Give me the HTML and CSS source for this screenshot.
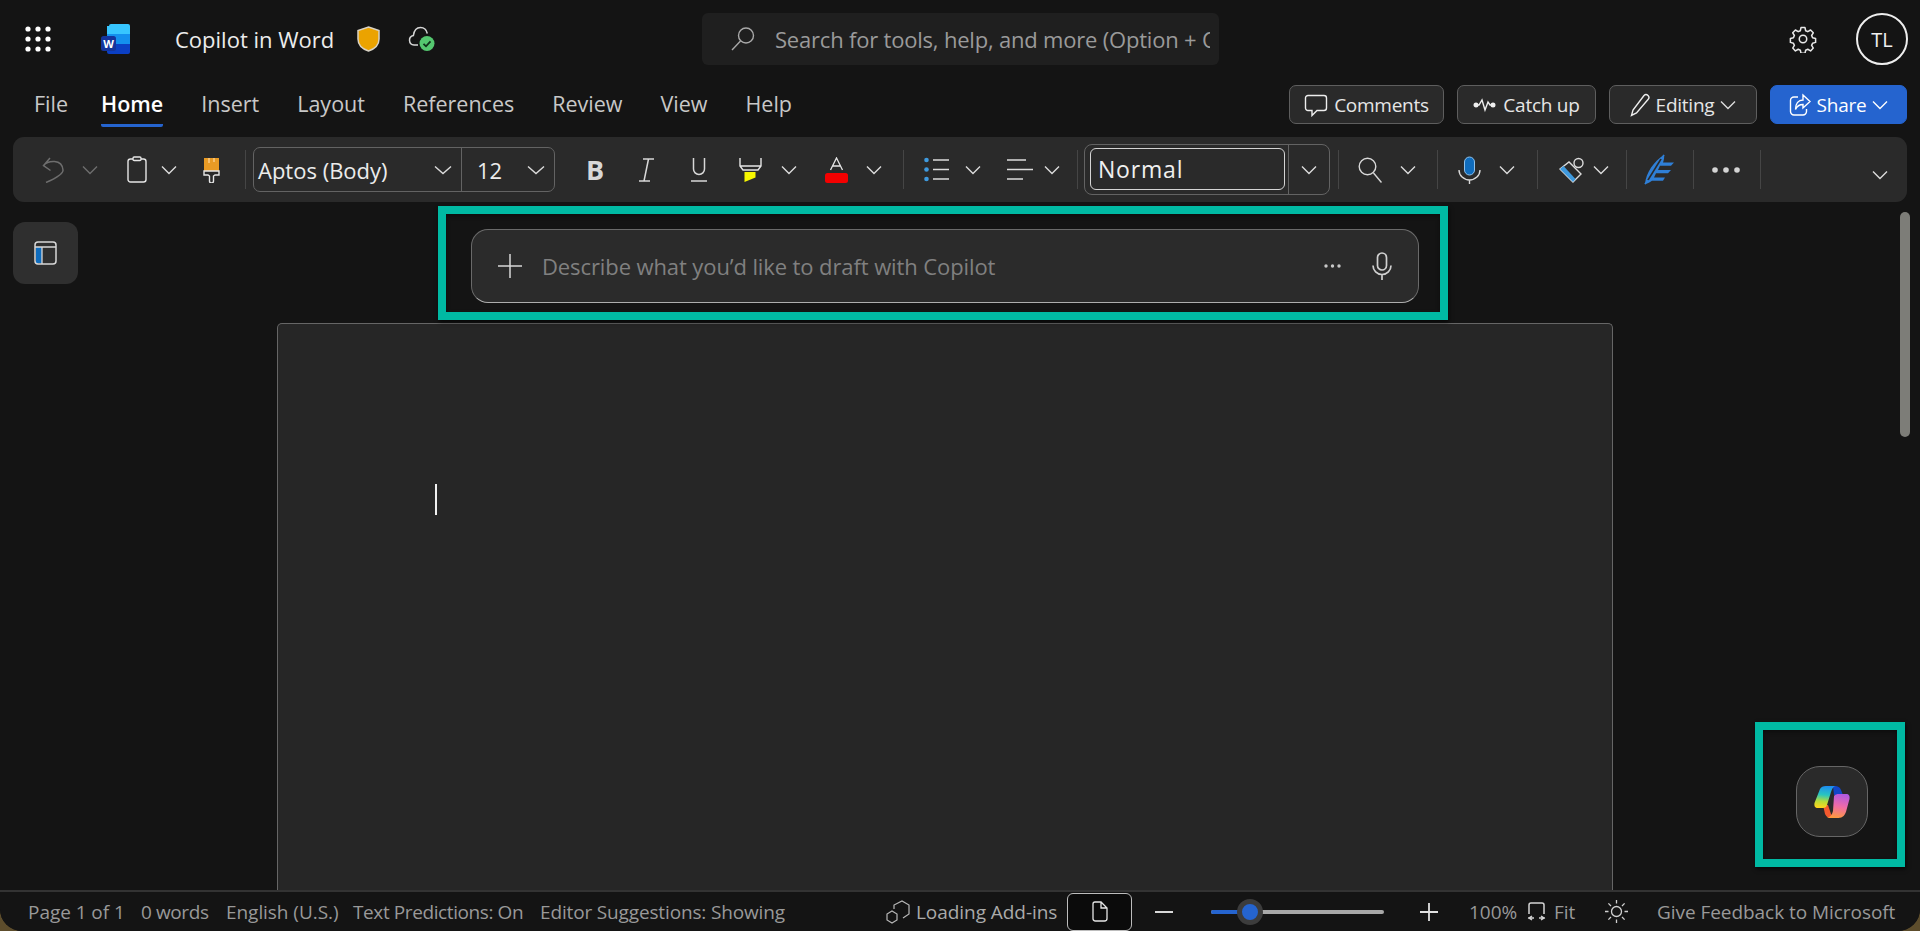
FILE: index.html
```html
<!DOCTYPE html>
<html lang="en">
<head>
    <meta charset="UTF-8">
    <title>Copilot in Word</title>
    <link rel="stylesheet" href="styles.css">
</head>
<body>
<div class="app">
    <!-- title bar -->
    <header class="titlebar">
        <svg class="waffle" width="26" height="26" viewBox="0 0 26 26" fill="#fff">
            <circle cx="3" cy="3" r="2.6"/><circle cx="13" cy="3" r="2.6"/><circle cx="23" cy="3" r="2.6"/>
            <circle cx="3" cy="13" r="2.6"/><circle cx="13" cy="13" r="2.6"/><circle cx="23" cy="13" r="2.6"/>
            <circle cx="3" cy="23" r="2.6"/><circle cx="13" cy="23" r="2.6"/><circle cx="23" cy="23" r="2.6"/>
        </svg>
        <svg class="word-logo" width="29" height="30" viewBox="0 0 29 30">
            <path d="M8 2a2 2 0 0 1 2-2h17a2 2 0 0 1 2 2v9H6V2z" fill="#37c6ff"/>
            <rect x="6" y="10" width="23" height="10" fill="#1490ee"/>
            <path d="M6 20h23v8a2 2 0 0 1-2 2H8a2 2 0 0 1-2-2z" fill="#0b3fc4"/>
            <rect x="0" y="12" width="15" height="15" rx="2.5" fill="#14349c"/>
            <text x="7.5" y="24" class="word-w">W</text>
        </svg>
        <span class="doc-title">Copilot in Word</span>
        <svg class="shield" width="23" height="26" viewBox="0 0 23 26">
            <path d="M11.5 1 22 4.500V13c0 6-4.500 10-10.500 12C5.500 23 1 19 1 13V4.500z" fill="#eba300" stroke="#d8d2c4" stroke-width="1.500"/>
        </svg>
        <svg class="cloud" width="27" height="26" viewBox="0 0 27 26">
            <path d="M10 19H6a4.800 4.800 0 0 1-.6-9.500C6 5 8.600 1.500 12.500 1.500c3.600 0 6 2.300 6.800 6" fill="none" stroke="#d6d6d6" stroke-width="1.500"/>
            <circle cx="19" cy="17.500" r="7.500" fill="#54c76f"/>
            <path d="M15.500 17.800l2.500 2.500 4.500-5" fill="none" stroke="#10301a" stroke-width="1.800"/>
        </svg>
        <div class="search">
            <svg class="search-icon" width="24" height="24" viewBox="0 0 24 24" fill="none" stroke="#a8a8a8" stroke-width="1.400">
                <circle cx="15" cy="8.500" r="7.500"/><path d="M9.500 14 1 23"/>
            </svg>
            <span class="search-text">Search for tools, help, and more (Option + Q)</span>
        </div>
        <svg class="gear" width="28" height="28" viewBox="0 0 24 24" fill="none" stroke="#e8e8e8" stroke-width="1.300" stroke-linejoin="round">
            <circle cx="12" cy="12" r="3.200"/>
            <path d="M10.300 2.200h3.400l.6 2.700 1.800.8 2.400-1.400 2.300 2.400-1.400 2.300.8 1.900 2.600.7v3.300l-2.600.7-.8 1.900 1.400 2.300-2.300 2.400-2.400-1.400-1.800.8-.6 2.700h-3.400l-.6-2.700-1.800-.8-2.400 1.400-2.300-2.400 1.400-2.300-.8-1.900-2.600-.7v-3.300l2.600-.7.8-1.900-1.400-2.300 2.300-2.400 2.400 1.400 1.800-.8z"/>
        </svg>
        <div class="avatar">TL</div>
    </header>

    <!-- tabs and action buttons -->
    <nav class="tabbar">
        <ul class="tabs">
            <li>File</li>
            <li class="active">Home</li>
            <li>Insert</li>
            <li>Layout</li>
            <li>References</li>
            <li>Review</li>
            <li>View</li>
            <li>Help</li>
        </ul>
        <div class="actions">
            <button class="action comments">
                <svg width="24" height="24" viewBox="0 0 24 24" fill="none" stroke="#eee" stroke-width="1.400"><path d="M4 2.500h16a2.500 2.500 0 0 1 2.500 2.500v10a2.500 2.500 0 0 1-2.500 2.500h-7l-5 5v-5H4A2.500 2.500 0 0 1 1.500 15V5A2.500 2.500 0 0 1 4 2.500z"/></svg>
                Comments
            </button>
            <button class="action catchup">
                <svg width="24" height="16" viewBox="0 0 24 16" fill="none" stroke="#eee" stroke-width="1.400"><path d="M3 8h3l3-5 3 10 3-8 2 3h4"/><circle cx="3" cy="8" r="1.800" fill="#eee"/><circle cx="20" cy="8" r="1.800" fill="#eee"/></svg>
                Catch up
            </button>
            <button class="action editing">
                <svg width="20" height="24" viewBox="0 0 20 24" fill="none" stroke="#eee" stroke-width="1.400"><path d="M14 2.500a2.800 2.800 0 0 1 4 4L6.500 20 1.500 22.500 3 17z"/></svg>
                Editing
                <svg class="chev" width="16" height="10" viewBox="0 0 16 10"><path d="M1 1.500l7 7 7-7"/></svg>
            </button>
            <button class="action share">
                <svg width="22" height="24" viewBox="0 0 22 24" fill="none" stroke="#fff" stroke-width="1.400"><path d="M9 4H5a3.500 3.500 0 0 0-3.500 3.500v11A3.500 3.500 0 0 0 5 22h9a3.500 3.500 0 0 0 3.500-3.500V16"/><path d="M14 2l7 6.500L14 15v-3.500c-4 0-6 1.500-7.500 5 0-6 3-9.500 7.500-9.500z"/></svg>
                Share
                <svg class="chev" width="16" height="10" viewBox="0 0 16 10"><path d="M1 1.500l7 7 7-7"/></svg>
            </button>
        </div>
    </nav>

    <!-- ribbon -->
    <div class="ribbon">
        <svg class="undo" width="22" height="26" viewBox="0 0 22 26" fill="none" stroke="#6e6e6e" stroke-width="1.500"><path d="M8 1 1.500 8.500l7 5M1.500 8.500C6 3.500 20 1.500 21 13c.3 4-9 9-17 12.500"/></svg>
        <svg class="chev off undo-chev" width="16" height="10" viewBox="0 0 16 10"><path d="M1 1.500l7 7 7-7"/></svg>
        <svg class="paste" width="20" height="27" viewBox="0 0 20 27" fill="none" stroke="#e6e6e6" stroke-width="1.400"><rect x="1" y="3" width="18" height="23" rx="2.500"/><rect x="6" y="1" width="8" height="3.500" rx="1.200" fill="#2a2a2a"/></svg>
        <svg class="chev paste-chev" width="16" height="10" viewBox="0 0 16 10"><path d="M1 1.500l7 7 7-7"/></svg>
        <svg class="brush" width="17" height="26" viewBox="0 0 17 26"><path d="M1 1h15v13H1z" fill="#e99b25"/><path d="M6 1v5M11 1v4" stroke="#ffd9a0" stroke-width="1.200"/><path d="M1 14h15v4h-4l-1.500 1v5a2 2 0 0 1-4 0v-5L5 18H1z" fill="#2a2a2a" stroke="#e6e6e6" stroke-width="1.400"/></svg>
        <span class="sep sep-a"></span>
        <div class="font-box">
            <div class="font-name">
                <span>Aptos (Body)</span>
                <svg class="chev" width="18" height="10" viewBox="0 0 18 10"><path d="M1 1.500l8 7 8-7"/></svg>
            </div>
            <div class="font-size">
                <span>12</span>
                <svg class="chev" width="18" height="10" viewBox="0 0 18 10"><path d="M1 1.500l8 7 8-7"/></svg>
            </div>
        </div>
        <span class="fmt bold">B</span>
        <svg class="italic" width="17" height="24" viewBox="0 0 17 24" fill="none" stroke="#d8d8d8" stroke-width="1.500"><path d="M5 1h11M1 23h11M10.500 1 6 23"/></svg>
        <svg class="under" width="16" height="25" viewBox="0 0 16 25" fill="none" stroke="#d8d8d8" stroke-width="1.500"><path d="M2.500 1v11a5.500 5.500 0 0 0 11 0V1M0 24h16"/></svg>
        <svg class="hilite" width="23" height="26" viewBox="0 0 23 26" fill="none"><path d="M5.500 15v10l11-4.500V15z" fill="#f7f700"/><path d="M1 1v8l3 4h15l3-4V1M1 9h21" stroke="#e6e6e6" stroke-width="1.400"/></svg>
        <svg class="chev hilite-chev" width="16" height="10" viewBox="0 0 16 10"><path d="M1 1.500l7 7 7-7"/></svg>
        <svg class="color" width="23" height="26" viewBox="0 0 23 26"><path d="M5.500 13 11.500 1l6 12M7.500 9h8" fill="none" stroke="#e6e6e6" stroke-width="1.300"/><rect y="16" width="23" height="10" rx="2.500" fill="#f40000"/></svg>
        <svg class="chev color-chev" width="16" height="10" viewBox="0 0 16 10"><path d="M1 1.500l7 7 7-7"/></svg>
        <span class="sep sep-b"></span>
        <svg class="bullets" width="25" height="25" viewBox="0 0 25 25"><circle cx="2.500" cy="3" r="2.300" fill="#3f9ade"/><circle cx="2.500" cy="12.500" r="2.300" fill="#3f9ade"/><circle cx="2.500" cy="22" r="2.300" fill="#3f9ade"/><path d="M9 3h16M9 12.500h16M9 22h16" stroke="#dcdcdc" stroke-width="1.500"/></svg>
        <svg class="chev bullets-chev" width="16" height="10" viewBox="0 0 16 10"><path d="M1 1.500l7 7 7-7"/></svg>
        <svg class="align" width="26" height="25" viewBox="0 0 26 25"><path d="M0 3h19M0 12.500h26M0 22h16" stroke="#dcdcdc" stroke-width="1.500"/></svg>
        <svg class="chev align-chev" width="16" height="10" viewBox="0 0 16 10"><path d="M1 1.500l7 7 7-7"/></svg>
        <span class="sep sep-c"></span>
        <div class="style-box">
            <div class="style-name">Normal</div>
            <div class="style-more">
                <svg class="chev" width="16" height="10" viewBox="0 0 16 10"><path d="M1 1.500l7 7 7-7"/></svg>
            </div>
        </div>
        <span class="sep sep-d"></span>
        <svg class="find" width="24" height="26" viewBox="0 0 24 26" fill="none" stroke="#d8d8d8" stroke-width="1.400"><circle cx="9.500" cy="9.500" r="8.300"/><path d="m15.500 16 8 9.500"/></svg>
        <svg class="chev find-chev" width="16" height="10" viewBox="0 0 16 10"><path d="M1 1.500l7 7 7-7"/></svg>
        <span class="sep sep-e"></span>
        <svg class="dictate" width="23" height="28" viewBox="0 0 23 28"><rect x="6.500" y="1" width="10" height="18" rx="5" fill="#0f6cbd" stroke="#8fc1ea" stroke-width="1"/><path d="M1 14a10.500 10 0 0 0 21 0M11.500 24v4" fill="none" stroke="#d8d8d8" stroke-width="1.400"/></svg>
        <svg class="chev dictate-chev" width="16" height="10" viewBox="0 0 16 10"><path d="M1 1.500l7 7 7-7"/></svg>
        <span class="sep sep-f"></span>
        <svg class="eraser" width="25" height="26" viewBox="0 0 25 26" fill="none"><circle cx="19.500" cy="6" r="4.500" stroke="#dcdcdc" stroke-width="1.400"/><path d="M1 12 10 5l12 12-8 8z" fill="#2a2a2a" stroke="#dcdcdc" stroke-width="1.400"/><path d="M1 12l3.500-3 12 13-2.500 3z" fill="#3f9ade"/></svg>
        <svg class="chev eraser-chev" width="16" height="10" viewBox="0 0 16 10"><path d="M1 1.500l7 7 7-7"/></svg>
        <span class="sep sep-g"></span>
        <svg class="editor" width="31" height="31" viewBox="0 0 31 37" preserveAspectRatio="none"><path d="M1 36 20 1" fill="none" stroke="#2f7fd6" stroke-width="1.500"/><path d="M1 36C2 22 10 9 20 1c.5 3 0 6-1 9h11l-3 4H16l-2 5h13l-3 4H12l-2 5h11l-2 4H8c-2 2-4 3-7 4z" fill="#2f7fd6"/><path d="M4 31 17 6" fill="none" stroke="#2a2a2a" stroke-width="1.800"/></svg>
        <span class="sep sep-h"></span>
        <svg class="more" width="30" height="8" viewBox="0 0 30 8" fill="#d4d4d4"><circle cx="4" cy="4" r="2.800"/><circle cx="15" cy="4" r="2.800"/><circle cx="26" cy="4" r="2.800"/></svg>
        <span class="sep sep-i"></span>
        <svg class="chev collapse" width="16" height="10" viewBox="0 0 16 10"><path d="M1 1.500l7 7 7-7"/></svg>
    </div>

    <!-- document area -->
    <main class="canvas">
        <div class="side">
            <button class="panel-btn">
                <svg width="23" height="24" viewBox="0 0 23 24" fill="none"><rect x="2" y="6" width="6" height="16" fill="#0f6cbd"/><rect x="1" y="1" width="21" height="22" rx="3" stroke="#d8d8d8" stroke-width="1.500"/><path d="M1 6h21M8 6v17" stroke="#d8d8d8" stroke-width="1.300"/></svg>
            </button>
        </div>
        <div class="doc-col">
            <div class="prompt">
                <svg class="prompt-plus" width="24" height="24" viewBox="0 0 24 24" stroke="#d8d8d8" stroke-width="1.500"><path d="M0 12h24M12 0v24"/></svg>
                <span class="prompt-text">Describe what you’d like to draft with Copilot</span>
                <svg class="prompt-dots" width="17" height="4" viewBox="0 0 17 4" fill="#c8c8c8"><circle cx="2" cy="2" r="1.700"/><circle cx="8.500" cy="2" r="1.700"/><circle cx="15" cy="2" r="1.700"/></svg>
                <svg class="prompt-mic" width="20" height="28" viewBox="0 0 20 28" fill="none" stroke="#d0d0d0" stroke-width="1.700"><rect x="5.500" y="1" width="9" height="17" rx="4.500"/><path d="M1 13.500a9 9 0 0 0 18 0M10 23v5"/></svg>
            </div>
            <div class="page">
                <span class="caret"></span>
            </div>
        </div>

        <!-- floating bits on top of the document -->
        <div class="scroll-thumb"></div>
        <button class="copilot-btn">
            <svg width="36" height="32" viewBox="0 0 36 32">
                <defs>
                    <linearGradient id="cpLeft" x1="0.500" y1="0" x2="0.400" y2="1">
                        <stop offset="0" stop-color="#1d8df0"/>
                        <stop offset="0.400" stop-color="#28c5c0"/>
                        <stop offset="0.700" stop-color="#b5dc3a"/>
                        <stop offset="1" stop-color="#ffd41c"/>
                    </linearGradient>
                    <linearGradient id="cpRight" x1="0.600" y1="0" x2="0.400" y2="1">
                        <stop offset="0" stop-color="#b15ae0"/>
                        <stop offset="0.500" stop-color="#ef6ba8"/>
                        <stop offset="1" stop-color="#ff9a3e"/>
                    </linearGradient>
                </defs>
                <path d="M19 0c4-.5 7 1 8 4l2 5h-9z" fill="#1246c8"/>
                <path d="M9 19h5l3 9 2 3c-3 1.500-6 1-8-3z" fill="#f4592e"/>
                <path d="M6 3C7 1 9 0 12 0h9c-2 1-3 3-4 6l-4 13c-.5 2-2 3-4 3H4c-3 0-4-2-3.500-5z" fill="url(#cpLeft)"/>
                <path d="M20 10c1-1.500 3-2 5-2h7c3 0 4 2 3.500 5l-3 11c-1 5-4 8-8 8H13c3-1 5-3 6-7z" fill="url(#cpRight)"/>
            </svg>
        </button>
        <div class="mark mark-prompt"></div>
        <div class="mark mark-copilot"></div>
    </main>

    <!-- status bar -->
    <footer class="statusbar">
        <span class="st page-count">Page 1 of 1</span>
        <span class="st words">0 words</span>
        <span class="st lang">English (U.S.)</span>
        <span class="st predict">Text Predictions: On</span>
        <span class="st suggest">Editor Suggestions: Showing</span>
        <svg class="addin-icon" width="24" height="24" viewBox="0 0 24 24" fill="none" stroke="#b8b8b8" stroke-width="1.200"><path d="M8 9V5l8-4 7 4v9l-6 4M1 14v6l5 3 5-3v-6l-5-3z"/></svg>
        <span class="st addins">Loading Add-ins</span>
        <button class="view-btn">
            <svg width="16" height="21" viewBox="0 0 16 21" fill="none" stroke="#e6e6e6" stroke-width="1.300"><path d="M3 1h6l6 6v10.500a2.500 2.500 0 0 1-2.500 2.500h-9A2.500 2.500 0 0 1 1 17.500V3a2 2 0 0 1 2-2zM9 1v6h6"/></svg>
        </button>
        <svg class="zoom-minus" width="18" height="2" viewBox="0 0 18 2"><rect width="18" height="2" fill="#d8d8d8"/></svg>
        <div class="slider"><span class="slider-fill"></span><span class="slider-thumb"></span></div>
        <svg class="zoom-plus" width="18" height="18" viewBox="0 0 18 18" stroke="#e0e0e0" stroke-width="1.800"><path d="M0 9h18M9 0v18"/></svg>
        <span class="st pct">100%</span>
        <svg class="fit-icon" width="19" height="19" viewBox="0 0 19 19" fill="none" stroke="#d4d4d4" stroke-width="1.500"><path d="M2 12V3a2 2 0 0 1 2-2h11a2 2 0 0 1 2 2v9M1 16h6M5 14l-3 2 3 2M18 16h-6M14 14l3 2-3 2"/></svg>
        <span class="st fit">Fit</span>
        <svg class="sun" width="23" height="23" viewBox="0 0 23 23" fill="none" stroke="#d0d0d0" stroke-width="1.300"><circle cx="11.500" cy="11.500" r="5"/><path d="M11.500 0v3.500M11.500 19.500V23M0 11.500h3.500M19.500 11.500H23M3.400 3.400 6 6M17 17l2.600 2.600M3.400 19.600 6 17M17 6l2.600-2.600"/></svg>
        <span class="st feedback">Give Feedback to Microsoft</span>
    </footer>
</div>
</body>
</html>
```

FILE: styles.css
```css
* {
    box-sizing: border-box;
}
html, body {
    margin: 0;
    height: 100%;
    overflow: hidden;
}
body {
    background: #5d4d2c;
    font-family: "Open Sans", "Noto Sans", sans-serif;
    color: #e6e6e6;
}
button {
    font-family: inherit;
    color: inherit;
    padding: 0;
}
svg {
    display: block;
    flex: none;
}
.chev {
    fill: none;
    stroke: #dcdcdc;
    stroke-width: 1.400;
}
.chev.off {
    stroke: #6e6e6e;
}

.app {
    display: flex;
    flex-direction: column;
    height: 931px;
    background: #141414;
    border-radius: 0 0 22px 22px;
    overflow: hidden;
}

/* title bar */
.titlebar {
    display: flex;
    align-items: center;
    height: 78px;
    flex: none;
}
.waffle {
    margin-left: 25px;
}
.word-logo {
    margin-left: 50px;
}
.word-w {
    font-size: 11px;
    font-weight: 700;
    fill: #fff;
    text-anchor: middle;
}
.doc-title {
    margin-left: 45px;
    width: 182px;
    font-size: 22px;
    color: #ececec;
    white-space: nowrap;
}
.shield {
    margin-top: -1px;
}
.cloud {
    margin-left: 28px;
}
.search {
    display: flex;
    align-items: center;
    width: 517px;
    height: 52px;
    margin-left: 267px;
    padding: 0 9px 0 29px;
    background: #1f1f1f;
    border-radius: 6px;
    overflow: hidden;
}
.search-text {
    margin-left: 20px;
    font-size: 22px;
    letter-spacing: -0.2px;
    color: #9a9a9a;
    white-space: nowrap;
    overflow: hidden;
}
.gear {
    margin-left: 570px;
}
.avatar {
    display: flex;
    align-items: center;
    justify-content: center;
    width: 52px;
    height: 52px;
    margin-left: 39px;
    border: 2px solid #eee;
    border-radius: 50%;
    font-size: 20px;
    color: #f0f0f0;
}

/* tabs */
.tabbar {
    display: flex;
    justify-content: space-between;
    height: 59px;
    flex: none;
    padding: 7px 13px 0 34px;
}
.tabs {
    display: flex;
    gap: 38px;
    margin: 0;
    padding: 0;
    list-style: none;
    font-size: 21.500px;
    color: #c8c8c8;
}
.tabs li {
    height: 42px;
    line-height: 38px;
    border-bottom: 3px solid transparent;
}
.tabs .active {
    margin-left: -5px;
    font-weight: 600;
    color: #fff;
    border-bottom-color: #2564cf;
    border-radius: 0 0 2px 2px;
}
.actions {
    display: flex;
    gap: 13px;
}
.action {
    display: flex;
    align-items: center;
    justify-content: center;
    gap: 6px;
    height: 39px;
    background: #2a2a2a;
    border: 1.500px solid #5e5e5e;
    border-radius: 7px;
    font-size: 19px;
    letter-spacing: -0.25px;
    color: #e6e6e6;
}
.comments {
    width: 155px;
}
.catchup {
    width: 139px;
}
.editing {
    width: 148px;
}
.share {
    width: 137px;
    background: #2564cf;
    border-color: #2564cf;
    color: #fff;
}
.share .chev {
    stroke: #fff;
}

/* ribbon */
.ribbon {
    display: flex;
    align-items: center;
    height: 65px;
    flex: none;
    margin: 0 13px;
    background: #2a2a2a;
    border-radius: 11px;
}
.sep {
    width: 1px;
    height: 39px;
    background: #454545;
}
.undo { margin-left: 29px; }
.undo-chev { margin-left: 18px; }
.paste { margin-left: 29px; }
.paste-chev { margin-left: 14px; }
.brush { margin-left: 26px; }
.sep-a { margin-left: 25px; }
.font-box {
    display: flex;
    height: 45px;
    width: 302px;
    margin-left: 7px;
    border: 1.500px solid #636363;
    border-radius: 7px;
    font-size: 22px;
    color: #ececec;
}
.font-name {
    display: flex;
    align-items: center;
    justify-content: space-between;
    width: 208px;
    padding: 0 9px 0 4px;
    border-right: 1.500px solid #636363;
    white-space: nowrap;
}
.font-size {
    display: flex;
    align-items: center;
    justify-content: space-between;
    flex: 1;
    padding: 0 9px 0 15px;
}
.fmt.bold {
    margin-left: 31px;
    width: 18px;
    font-size: 27px;
    font-weight: 700;
    color: #d8d8d8;
    font-family: "Open Sans", sans-serif;
}
.italic { margin-left: 34px; }
.under { margin-left: 36px; }
.hilite { margin-left: 32px; }
.hilite-chev { margin-left: 19px; }
.color { margin-left: 28px; }
.color-chev { margin-left: 18px; }
.sep-b { margin-left: 21px; }
.bullets { margin-left: 20px; }
.bullets-chev { margin-left: 16px; }
.align { margin-left: 26px; }
.align-chev { margin-left: 11px; }
.sep-c { margin-left: 17px; }
.style-box {
    display: flex;
    height: 51px;
    width: 246px;
    margin-left: 6px;
    border: 1.500px solid #636363;
    border-radius: 8px;
}
.style-name {
    width: 195px;
    height: 42px;
    margin: 3px 0 0 5px;
    padding-left: 7px;
    border: 1.500px solid #d4d4d4;
    border-radius: 6px;
    font-size: 23px;
    line-height: 40px;
    letter-spacing: 0.8px;
    color: #f0f0f0;
}
.style-more {
    display: flex;
    align-items: center;
    justify-content: center;
    flex: 1;
    margin-left: 3px;
    border-left: 1.500px solid #636363;
}
.sep-d { margin-left: 8px; }
.find { margin-left: 19px; }
.find-chev { margin-left: 18px; }
.sep-e { margin-left: 21px; }
.dictate { margin-left: 20px; }
.dictate-chev { margin-left: 18px; }
.sep-f { margin-left: 22px; }
.eraser { margin-left: 21px; }
.eraser-chev { margin-left: 9px; }
.sep-g { margin-left: 17px; }
.editor { margin-left: 17px; }
.sep-h { margin-left: 18px; }
.more { margin-left: 17px; }
.sep-i { margin-left: 19px; }
.collapse {
    margin-left: 111px;
    margin-top: 10px;
}

/* document area */
.canvas {
    position: relative;
    display: flex;
    flex: 1;
    min-height: 0;
}
.side {
    width: 277px;
    flex: none;
    padding: 20px 0 0 13px;
}
.panel-btn {
    display: flex;
    align-items: center;
    justify-content: center;
    width: 65px;
    height: 62px;
    background: #2f2f2f;
    border: 0;
    border-radius: 12px;
}
.doc-col {
    display: flex;
    flex-direction: column;
    width: 1336px;
}
.prompt {
    display: flex;
    align-items: center;
    flex: none;
    width: 948px;
    height: 74px;
    margin: 27px 0 0 194px;
    padding: 0 26px 0 26px;
    background: #2b2b2b;
    border: 1.500px solid #6a6a6a;
    border-bottom-color: #adadad;
    border-radius: 17px;
}
.prompt-text {
    flex: 1;
    margin-left: 20px;
    font-size: 22px;
    letter-spacing: -0.1px;
    color: #808080;
}
.prompt-dots {
    margin-right: 31px;
}
.page {
    flex: 1;
    margin-top: 20px;
    padding: 160px 0 0 157px;
    background: #262626;
    border: 1.500px solid #666;
    border-bottom: 0;
    border-radius: 5px 5px 0 0;
}
.caret {
    display: block;
    width: 2px;
    height: 31px;
    background: #f0f0f0;
}
.scroll-thumb {
    position: absolute;
    left: 1900px;
    top: 10px;
    width: 10px;
    height: 225px;
    background: #7d7d78;
    border-radius: 5px;
}
.copilot-btn {
    position: absolute;
    left: 1796px;
    top: 564px;
    display: flex;
    align-items: center;
    justify-content: center;
    width: 72px;
    height: 71px;
    background: #2a2a2a;
    border: 1.500px solid #666;
    border-radius: 24px;
}
.mark {
    position: absolute;
    border: 8px solid #00b9a3;
    box-shadow: 1px 2px 4px rgba(0, 0, 0, 0.7), inset 0 2px 4px rgba(0, 0, 0, 0.4);
}
.mark-prompt {
    left: 438px;
    top: 4px;
    width: 1010px;
    height: 114px;
}
.mark-copilot {
    left: 1755px;
    top: 520px;
    width: 150px;
    height: 145px;
}

/* status bar */
.statusbar {
    display: flex;
    align-items: center;
    height: 41px;
    flex: none;
    background: #141414;
    border-top: 2px solid #333;
    font-size: 19px;
    letter-spacing: -0.05px;
    color: #999;
    white-space: nowrap;
}
.page-count { margin-left: 28px; width: 113px; }
.words { width: 85px; letter-spacing: -0.4px; }
.lang { width: 127px; }
.predict { width: 187px; letter-spacing: -0.4px; }
.suggest { width: 346px; letter-spacing: -0.15px; }
.addin-icon { flex: none; }
.addins { margin-left: 6px; width: 151px; color: #aaa; }
.view-btn {
    display: flex;
    align-items: center;
    justify-content: center;
    width: 65px;
    height: 38px;
    background: #0b0b0b;
    border: 1.500px solid #bdbdbd;
    border-radius: 6px;
}
.zoom-minus { margin-left: 23px; }
.slider {
    position: relative;
    width: 173px;
    height: 4px;
    margin-left: 38px;
    background: #a8a8a8;
    border-radius: 2px;
}
.slider-fill {
    position: absolute;
    left: 0;
    top: 0;
    width: 39px;
    height: 4px;
    background: #2564cf;
    border-radius: 2px;
}
.slider-thumb {
    position: absolute;
    left: 26px;
    top: -11px;
    width: 26px;
    height: 26px;
    background: #2564cf;
    border: 5px solid #3c3c3c;
    border-radius: 50%;
}
.zoom-plus { margin-left: 36px; }
.pct { margin-left: 31px; width: 47px; }
.fit-icon { margin-left: 11px; }
.fit { margin-left: 8px; width: 21px; }
.sun { margin-left: 30px; }
.feedback { margin-left: 29px; }
```
